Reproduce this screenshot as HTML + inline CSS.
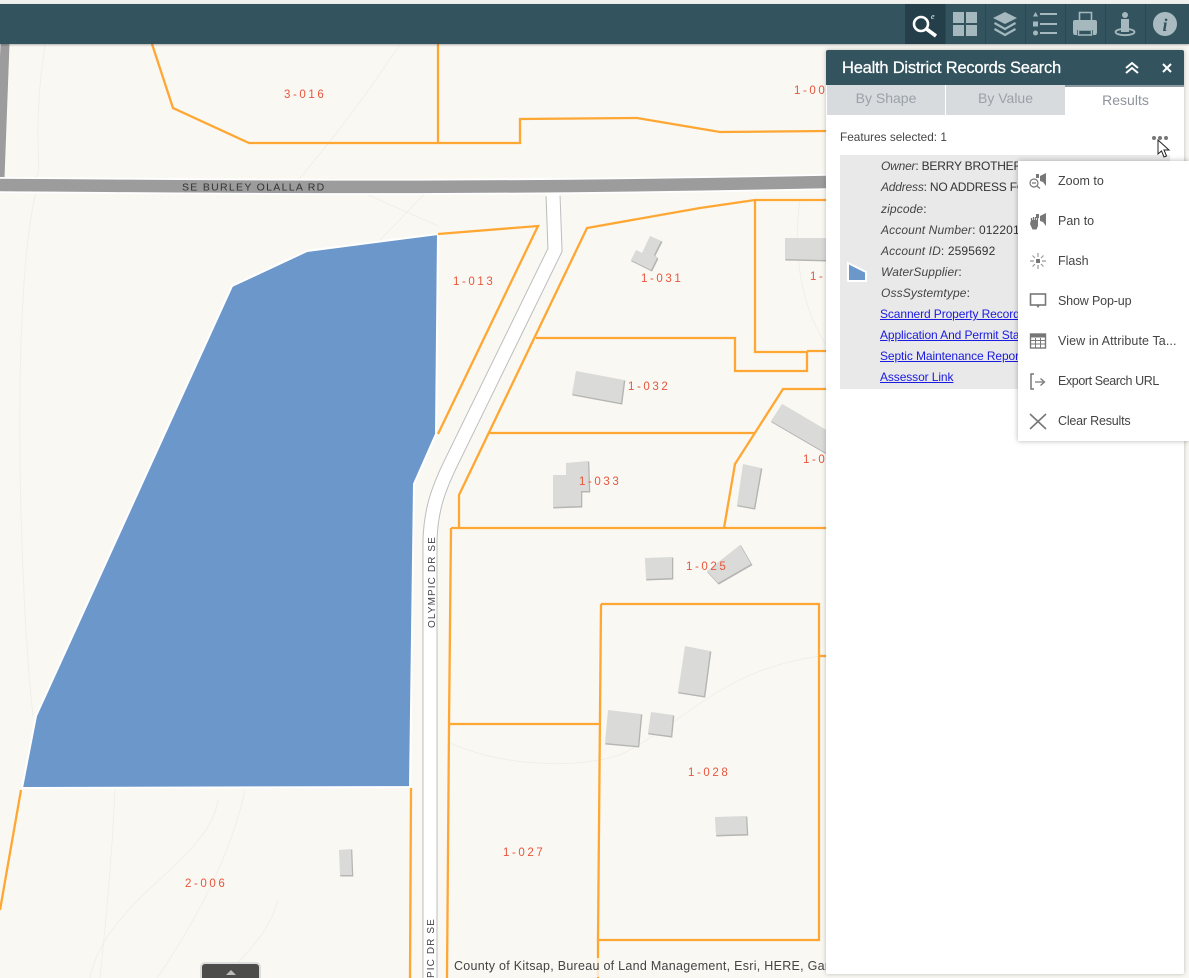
<!DOCTYPE html>
<html><head><meta charset="utf-8"><style>
*{box-sizing:border-box}
html,body{margin:0;padding:0;width:1189px;height:978px;overflow:hidden;background:#faf8f3;font-family:"Liberation Sans",sans-serif}
#map{position:absolute;left:0;top:0}
#strip{position:absolute;left:0;top:0;width:1189px;height:4px;background:#f0f0ee}
#hdr{position:absolute;left:0;top:4px;width:1189px;height:40px;background:#33545f;box-shadow:0 1px 2px rgba(0,0,0,.3)}
.b{position:absolute;top:0;width:40px;height:40px;border-left:1px solid #2a4752}
.b svg{position:absolute;left:-1px;top:0}
#attr{position:absolute;left:450px;top:958px;width:376px;height:19px;background:rgba(250,248,243,.8);font-size:12.5px;color:#444;padding:1px 0 0 4px;white-space:nowrap;overflow:hidden;letter-spacing:.28px}
#tog{position:absolute;left:200px;top:962px;width:61px;height:16px;background:#4c4c4a;border:2px solid #ddd;border-bottom:0;border-radius:5px 5px 0 0}
#tog i{position:absolute;left:24px;top:6px;width:0;height:0;border:5px solid transparent;border-top:0;border-bottom:5px solid #bbb}
#panel{position:absolute;left:826px;top:50px;width:358px;height:924px;background:#fff;box-shadow:0 0 5px rgba(0,0,0,.25);border-radius:2px;overflow:hidden}
#ph{position:absolute;left:0;top:0;width:358px;height:35px;background:#33545f;color:#fff;font-size:16.5px;line-height:36px;padding-left:16px;letter-spacing:-.22px;-webkit-text-stroke:.25px #fff}
.t{position:absolute;top:35px;height:30px;background:#d8dbde;color:#9aa1a9;font-size:14px;line-height:27px;text-align:center}
#fs{position:absolute;left:14px;top:80px;font-size:11.8px;color:#444}
#row{position:absolute;left:14px;top:105px;width:330px;height:234px;background:#e9e9e9;font-size:12px;color:#333}
#row div{position:absolute;left:41px;white-space:nowrap;line-height:16px;letter-spacing:.12px}
#row em{font-style:italic;color:#444}
#row a{color:#1a1ae0;text-decoration:underline;letter-spacing:-.1px}
#menu{position:absolute;left:1018px;top:161px;width:171px;height:280px;background:#fff;box-shadow:0 0 5px rgba(0,0,0,.3);font-size:12.5px;color:#444}
#menu div{position:absolute;left:40px;white-space:nowrap;line-height:16px}
#menu svg{position:absolute;left:10px;width:20px;height:20px}
</style></head><body>
<svg id="map" width="1189" height="978" viewBox="0 0 1189 978">
<rect width="1189" height="978" fill="#faf8f3"/>
<g fill="none" stroke="#f0efe9" stroke-width="1">
<path d="M45,44C30,150 45,170 35,178M400,44C370,90 340,130 300,178M36,192C10,300 20,600 33,716"/>
<path d="M438,226L330,178M380,240L438,180M115,790C112,860 105,930 100,978M218,800C210,860 105,900 90,978M245,790C230,860 190,930 157,978M278,900C270,930 250,950 238,962"/>
<path d="M450,743C500,765 570,770 620,755C690,720 720,670 820,656"/>
<path d="M800,200C790,270 810,320 826,345"/>
</g>
<path d="M5,44L0,178" stroke="#9c9c9c" stroke-width="9" fill="none"/>
<path d="M0,185C200,186 450,190 826,182" stroke="#fff" stroke-width="16" fill="none"/>
<path d="M0,185C200,186 450,190 826,182" stroke="#9c9c9c" stroke-width="12.500" fill="none"/>
<path d="M553,196L555,250L450,465C438,490 431,510 430,540L430,978" stroke="#bdbdbd" stroke-width="15" fill="none"/>
<path d="M553,194L555,250L450,465C438,490 431,510 430,540L430,978" stroke="#fff" stroke-width="13" fill="none"/>
<polygon points="232,286 307,251 438,234 436,434 414,484 410,787 22,788 36,716" fill="#6b97cb" stroke="#fff" stroke-width="2"/>
<g fill="none" stroke="#ffa733" stroke-width="2.300">
<path d="M152,44L173,108L249,143L520,143L520,119L637,118L720,132L826,131"/>
<path d="M438,44V143"/>
<path d="M438,234L538,226L438,434"/>
<path d="M826,200H755L700,208L587,228L459,495V528"/>
<path d="M755,201V352H807V371H735V338H536"/>
<path d="M807,351H826"/>
<path d="M489,433H755"/>
<path d="M826,389H783L735,464L724,528"/>
<path d="M451,528H826"/>
<path d="M451,528L449,725L447,978"/>
<path d="M449,724H600"/>
<path d="M601,604H819V940H598V978"/>
<path d="M601,604L598,940"/>
<path d="M819,656H826"/>
<path d="M411,788L410,978"/>
<path d="M21,790L0,910"/>
</g>
<g fill="#b5b5b3" transform="translate(.8,1)" stroke="#b5b5b3" stroke-width="1">
<polygon points="650,236 661,241 654,255 657,258 651,270 631,260 636,250 642,253"/>
<polygon points="785,238 826,238 826,260 785,259"/>
<polygon points="576,371 624,380 621,403 572,394"/>
<polygon points="566,463 588,461 589,491 581,491 581,506 553,507 553,475 566,475"/>
<polygon points="782,404 826,430 826,453 771,421"/>
<polygon points="743,464 761,468 754,508 737,505"/>
<polygon points="645,558 672,557 672,578 646,579"/>
<polygon points="740,545 751,564 718,583 707,571"/>
<polygon points="685,646 710,651 704,696 678,692"/>
<polygon points="608,710 641,714 638,746 605,743"/>
<polygon points="651,712 673,715 671,736 648,733"/>
<polygon points="715,817 746,816 747,834 716,835"/>
<polygon points="339,850 351,849 352,875 340,875"/>
</g>
<g fill="#dadad8">
<polygon points="650,236 661,241 654,255 657,258 651,270 631,260 636,250 642,253"/>
<polygon points="785,238 826,238 826,260 785,259"/>
<polygon points="576,371 624,380 621,403 572,394"/>
<polygon points="566,463 588,461 589,491 581,491 581,506 553,507 553,475 566,475"/>
<polygon points="782,404 826,430 826,453 771,421"/>
<polygon points="743,464 761,468 754,508 737,505"/>
<polygon points="645,558 672,557 672,578 646,579"/>
<polygon points="740,545 751,564 718,583 707,571"/>
<polygon points="685,646 710,651 704,696 678,692"/>
<polygon points="608,710 641,714 638,746 605,743"/>
<polygon points="651,712 673,715 671,736 648,733"/>
<polygon points="715,817 746,816 747,834 716,835"/>
<polygon points="339,850 351,849 352,875 340,875"/>
</g>
<g font-family="Liberation Sans,sans-serif" font-size="11.5" fill="#e8553c" letter-spacing="2.6">
<text x="284" y="98">3-016</text>
<text x="794" y="94">1-00</text>
<text x="453" y="285">1-013</text>
<text x="641" y="282">1-031</text>
<text x="810" y="280">1-</text>
<text x="628" y="390">1-032</text>
<text x="803" y="463">1-0</text>
<text x="579" y="485">1-033</text>
<text x="686" y="570">1-025</text>
<text x="688" y="776">1-028</text>
<text x="503" y="856">1-027</text>
<text x="185" y="887">2-006</text>
</g>
<g font-family="Liberation Sans,sans-serif" font-size="10" fill="#444" letter-spacing="1.1">
<text x="182" y="190.500" font-size="10.500" letter-spacing="1.3" fill="#333">SE BURLEY OLALLA RD</text>
<text transform="translate(435,628) rotate(-90)">OLYMPIC DR SE</text>
<text transform="translate(434,978) rotate(-90)">PIC DR SE</text>
</g>
</svg>
<div id="strip"></div>
<div id="hdr">
<div class="b" style="left:905px;background:#243f49;border-left:0"><svg style="left:0" width="40" height="40" viewBox="0 0 40 40"><circle cx="16" cy="20" r="7" fill="none" stroke="#fff" stroke-width="2.600"/><path d="M21.500,25L31,32" stroke="#fff" stroke-width="3.600"/><text x="26" y="15" font-size="8" fill="#fff" font-style="italic" font-family="Liberation Serif,serif">e</text></svg></div>
<div class="b" style="left:945px"><svg width="40" height="40"><g fill="#a5b8be"><rect x="8" y="8" width="11" height="11"/><rect x="21" y="8" width="11" height="11"/><rect x="8" y="21" width="11" height="11"/><rect x="21" y="21" width="11" height="11"/></g></svg></div>
<div class="b" style="left:985px"><svg width="40" height="40"><path d="M20,8L32,14L20,20L8,14Z" fill="#a5b8be"/><path d="M9.500,19L20,25L30.500,19M9.500,25L20,31L30.500,25" fill="none" stroke="#a5b8be" stroke-width="2.200"/></svg></div>
<div class="b" style="left:1025px"><svg width="40" height="40"><g fill="#a5b8be"><path d="M8,12.500L10.500,8L13,12.500Z"/><rect x="8" y="17.500" width="5" height="5"/><circle cx="10.500" cy="29" r="2.500"/><rect x="15" y="9" width="17" height="2"/><rect x="15" y="19" width="17" height="2"/><rect x="15" y="28" width="17" height="2"/></g></svg></div>
<div class="b" style="left:1065px"><svg width="40" height="40"><path d="M14.500,17V8.500H26.500V17" fill="none" stroke="#a5b8be" stroke-width="1.600"/><path d="M10,16H30Q32,16 32,18V28Q32,31 30,31H28V26H12V31H10Q8,31 8,28V18Q8,16 10,16Z" fill="#a5b8be"/><rect x="13.500" y="26" width="13" height="5" fill="none" stroke="#a5b8be" stroke-width="1.500"/></svg></div>
<div class="b" style="left:1105px"><svg width="40" height="40" fill="#a5b8be"><circle cx="20" cy="11" r="3"/><path d="M16,15H24V28H16Z"/><ellipse cx="20" cy="28" rx="9.500" ry="3.200" fill="none" stroke="#a5b8be" stroke-width="1.800"/></svg></div>
<div class="b" style="left:1145px"><svg width="40" height="40"><circle cx="20" cy="20" r="12" fill="#a9bbc1"/><text x="20" y="27" text-anchor="middle" font-size="18" font-weight="bold" font-style="italic" font-family="Liberation Serif,serif" fill="#33545f">i</text></svg></div>
</div>
<div id="attr">County of Kitsap, Bureau of Land Management, Esri, HERE, Garmin</div>
<div id="tog"><i></i></div>
<div id="panel">
<div id="ph">Health District Records Search
<svg style="position:absolute;left:298px;top:11px" width="16" height="14"><path d="M2,7L8,2L14,7M2,12L8,7L14,12" fill="none" stroke="#fff" stroke-width="2"/></svg>
<svg style="position:absolute;left:335px;top:12px" width="12" height="12"><path d="M2,2L10,10M10,2L2,10" stroke="#fff" stroke-width="2"/></svg>
</div>
<div class="t" style="left:1px;width:118px">By Shape</div>
<div class="t" style="left:120px;width:119px">By Value</div>
<div style="position:absolute;left:239px;top:35px;width:119px;height:2px;background:#8b9aa3"></div>
<div style="position:absolute;left:240px;top:37px;width:119px;text-align:center;color:#8d949c;font-size:14px;line-height:27px">Results</div>
<div id="fs">Features selected: 1</div>
<svg style="position:absolute;left:325px;top:85px" width="20" height="8"><g fill="#777"><circle cx="3" cy="3" r="2"/><circle cx="9" cy="3" r="2"/><circle cx="15" cy="3" r="2"/></g></svg>
<div id="row">
<svg style="position:absolute;left:6px;top:106px" width="22" height="22"><polygon points="2,2 20,11 20,20 2,20" fill="#6b97cb" stroke="#fff" stroke-width="2"/></svg>
<div style="top:3px;letter-spacing:-.2px"><em>Owner</em>: BERRY BROTHERS</div>
<div style="top:24px;letter-spacing:-.2px"><em>Address</em>: NO ADDRESS FOUND</div>
<div style="top:46px"><em>zipcode</em>:</div>
<div style="top:67px"><em>Account Number</em>: 012201</div>
<div style="top:88px"><em>Account ID</em>: 2595692</div>
<div style="top:109px"><em>WaterSupplier</em>:</div>
<div style="top:130px"><em>OssSystemtype</em>:</div>
<div style="top:151px;left:40px"><a>Scannerd Property Records</a></div>
<div style="top:172px;left:40px"><a>Application And Permit Status</a></div>
<div style="top:193px;left:40px"><a>Septic Maintenance Reports</a></div>
<div style="top:214px;left:40px"><a>Assessor Link</a></div>
</div>
</div>
<div id="menu">
<svg style="top:10px" viewBox="0 0 20 20"><g fill="#777"><path d="M12,5L18,2V15L15,11L12,10Z"/><rect x="8" y="3" width="3" height="4"/></g><circle cx="6" cy="12" r="4" fill="none" stroke="#777" stroke-width="1.200"/><path d="M4,12H8M9,15L12,17.500" stroke="#777" stroke-width="1.200"/></svg>
<div style="top:12px">Zoom to</div>
<svg style="top:50px" viewBox="0 0 20 20"><g fill="#777"><path d="M12,5L18,2V15L15,11L12,10Z"/><rect x="8" y="3" width="3" height="4"/><path d="M3,9H10V15L8.500,18.500H4.500L2,13Z"/></g><path d="M3.500,9V7M5.500,9V6M7.500,9V6M9.500,9V7" stroke="#777" stroke-width="1.300"/></svg>
<div style="top:52px">Pan to</div>
<svg style="top:90px" viewBox="0 0 20 20"><rect x="8" y="8" width="4" height="4" fill="#777"/><path d="M10,2V6M10,14V18M2,10H6M14,10H18M4.500,4.500L7,7M13,13L15.500,15.500M15.500,4.500L13,7M7,13L4.500,15.500" stroke="#999" stroke-width="1.200"/></svg>
<div style="top:92px">Flash</div>
<svg style="top:130px" viewBox="0 0 20 20"><rect x="2.500" y="3" width="15" height="11" fill="none" stroke="#777" stroke-width="1.600"/><path d="M8,14H12L10,17Z" fill="#777"/></svg>
<div style="top:132px;letter-spacing:-.15px">Show Pop-up</div>
<svg style="top:170px" viewBox="0 0 20 20"><rect x="2.500" y="3" width="15" height="14" fill="none" stroke="#777" stroke-width="1.400"/><path d="M2.500,5H17.500" stroke="#777" stroke-width="3"/><path d="M3,9.500H17M3,13H17M7.500,7V17M12.500,7V17" stroke="#777"/></svg>
<div style="top:172px;letter-spacing:.1px">View in Attribute Ta...</div>
<svg style="top:210px" viewBox="0 0 20 20"><path d="M6,3H3V18H6" fill="none" stroke="#777" stroke-width="1.500"/><path d="M7,11H15M12.500,7.500L16.500,11L12.500,14.500" fill="none" stroke="#777" stroke-width="1.300"/></svg>
<div style="top:212px;letter-spacing:-.4px">Export Search URL</div>
<svg style="top:250px" viewBox="0 0 20 20"><path d="M2,3L18,18M18,3L2,18" stroke="#777" stroke-width="1.600"/></svg>
<div style="top:252px;letter-spacing:-.2px">Clear Results</div>
</div>
<svg style="position:absolute;left:1156px;top:139px" width="16" height="20"><path d="M2,1V15L5.500,12L8,18L10.500,17L8,11H13Z" fill="#fff" stroke="#222" stroke-width="1"/></svg>
</body></html>
